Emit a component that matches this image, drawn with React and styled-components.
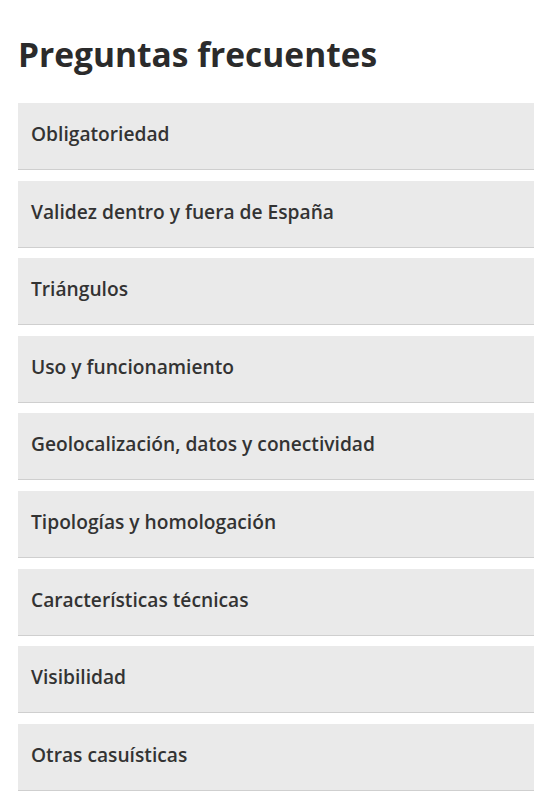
import React from "react";
import styled, { createGlobalStyle } from "styled-components";

const GlobalStyle = createGlobalStyle`
  body {
    margin: 0;
    background: #fff;
    font-family: "Open Sans", "Noto Sans", sans-serif;
    color: #333;
  }
`;

const items = [
  "Obligatoriedad",
  "Validez dentro y fuera de España",
  "Triángulos",
  "Uso y funcionamiento",
  "Geolocalización, datos y conectividad",
  "Tipologías y homologación",
  "Características técnicas",
  "Visibilidad",
  "Otras casuísticas",
];

export default function App() {
  return (
    <Page>
      <GlobalStyle />
      <Title>Preguntas frecuentes</Title>
      <List>
        {items.map((item) => (
          <Item key={item}>{item}</Item>
        ))}
      </List>
    </Page>
  );
}

const Page = styled.section`
  padding: 30px 0 0 18px;
`;

const Title = styled.h1`
  margin: 0 0 25px;
  font-size: 33.5px;
  line-height: 48px;
  font-weight: 700;
  color: #2b2b2b;
`;

const List = styled.div`
  display: flex;
  flex-direction: column;
  gap: 10.6px;
`;

const Item = styled.div`
  height: 67px;
  box-sizing: border-box;
  display: flex;
  align-items: center;
  padding: 0 13px 5px;
  background: #eaeaea;
  border-bottom: 1px solid #cfcfcf;
  font-size: 19.2px;
  font-weight: 600;
  color: #333;
`;
